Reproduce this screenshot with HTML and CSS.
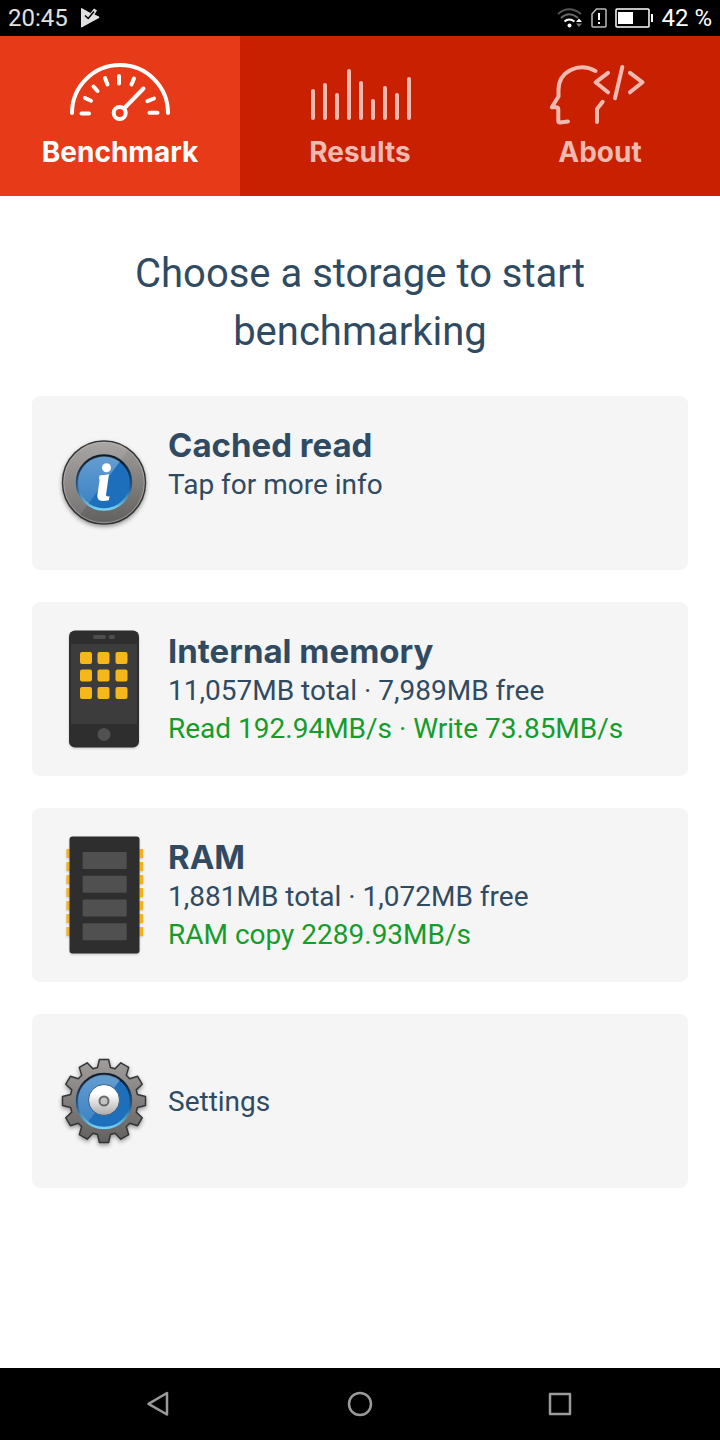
FILE: index.html
```html
<!DOCTYPE html>
<html lang="en">

<head>
  <meta charset="UTF-8">
  <meta name="viewport" content="width=device-width, initial-scale=1.0">
  <title>Storage Benchmark</title>
  <link rel="stylesheet" href="styles.css">
</head>

<body>
  <header class="status-bar">
    <span class="clock">20:45</span>
    <svg width="20" height="20" viewBox="0 0 20 20">
      <path d="M1 0.5 Q1 -0.3 2 0.2 L10.5 5 L14 0.5 L17 2.5 L14.5 6.5 L19 8.5 Q19.8 9.3 19 10 L2 19.3 Q1 19.7 1 18.5 Z" fill="#e0e0e0"/>
      <path d="M5 7.5 L8.2 10.5 L14 3.5" fill="none" stroke="#000" stroke-width="1.5"/>
    </svg>
    <div class="status-right">
      <svg width="26" height="20" viewBox="0 0 26 20" fill="none" stroke-width="2">
        <path d="M1 6 Q12 -3.5 24 6" stroke="#555"/>
        <path d="M4 10 Q12 2.5 21 10" stroke="#666"/>
        <path d="M7.5 13.5 Q12 9.5 17.5 13.5" stroke="#fff"/>
        <circle cx="12.5" cy="17.5" r="2" fill="#fff"/>
        <path d="M19 14 L22 10.5 L25 14 Z" fill="#fff"/>
        <path d="M19 15.5 L22 19 L25 15.5 Z" fill="#777"/>
      </svg>
      <svg width="16" height="20" viewBox="0 0 16 20">
        <path d="M5.5 1 H14 Q15 1 15 2 V18 Q15 19 14 19 H2 Q1 19 1 18 V6 Z" fill="none" stroke="#bbb" stroke-width="1.5"/>
        <path d="M8 5 V12 M8 14 V16" stroke="#fff" stroke-width="2"/>
      </svg>
      <svg width="38" height="20" viewBox="0 0 38 20">
        <rect x="1" y="1" width="33" height="18" rx="1" fill="none" stroke="#fff" stroke-width="1.5"/>
        <rect x="3" y="4" width="15" height="12" fill="#fff"/>
        <rect x="36" y="6" width="2" height="8" fill="#fff"/>
      </svg>
      <span>42 %</span>
    </div>
  </header>

  <nav class="tabs">
    <a href="#benchmark" class="tab active">
      <svg class="tab-icon" viewBox="0 0 100 62">
        <path d="M2 51 A48 48 0 0 1 98 51"/>
        <path d="M11.5 51.5 H19 M15 36 L21 38.7 M23.5 24.5 L27.5 29 M35 16 L37.5 22.5 M49 14 V21.5 M64 16.5 L61.5 22.5 M84 36.5 L77.5 39.2 M87.5 50.7 H79.5"/>
        <path d="M54 46.5 L73.5 26.5"/>
        <circle cx="49.7" cy="51" r="6"/>
      </svg>
      <span>Benchmark</span>
    </a>
    <a href="#results" class="tab">
      <svg class="tab-icon" viewBox="0 0 100 62">
        <path d="M3 29 V56 M15 23 V56 M27 33 V56 M39 9 V56 M51 21 V56 M63 39 V56 M75 26 V56 M87 33 V56 M99 17 V56"/>
      </svg>
      <span>Results</span>
    </a>
    <a href="#about" class="tab">
      <svg class="tab-icon" viewBox="0 0 100 62">
        <path d="M45.5 9 C29 0 8.5 9 8.5 28 V34.5 L1.8 45.3 H6.5 Q8.3 45.5 8.3 47.5 V59 Q8.3 60.6 10 60.5 L18 59.5"/>
        <path d="M52.7 39.8 L47 47 V60"/>
        <path d="M58 10.8 L45.6 20.3 L58 30.3 M72.3 5 L65 36.3 M80 10.8 L92.5 20.3 L80 30.3"/>
      </svg>
      <span>About</span>
    </a>
  </nav>

  <main>
    <h1>Choose a storage to start benchmarking</h1>

    <button class="card">
      <svg class="card-icon" width="88" height="88" viewBox="0 0 88 88">
        <defs>
          <linearGradient id="metal" x1="0" y1="0" x2="0" y2="1">
            <stop offset="0" stop-color="#a09d9b"/>
            <stop offset="1" stop-color="#62605f"/>
          </linearGradient>
          <linearGradient id="shine" x1="0" y1="0" x2="0" y2="1">
            <stop offset="0" stop-color="#fff" stop-opacity="0.32"/>
            <stop offset="1" stop-color="#fff" stop-opacity="0.14"/>
          </linearGradient>
          <linearGradient id="rim" x1="0" y1="0" x2="0" y2="1">
            <stop offset="0.1" stop-color="#0d1c2e"/>
            <stop offset="0.6" stop-color="#235d91"/>
            <stop offset="1" stop-color="#74d2f5"/>
          </linearGradient>
          <linearGradient id="silver" x1="0" y1="0" x2="0" y2="1">
            <stop offset="0.3" stop-color="#fff"/>
            <stop offset="1" stop-color="#a9a9ab"/>
          </linearGradient>
        </defs>
        <circle cx="44" cy="43.5" r="41.5" fill="url(#metal)" stroke="#353535" stroke-width="1.5"/>
        <circle cx="44" cy="43.5" r="40.3" fill="none" stroke="#bcbab8" stroke-width="1" opacity="0.6"/>
        <path d="M20 76 A40 40 0 0 1 68 11 Z" fill="#fff" opacity="0.1"/>
        <circle cx="44" cy="43.5" r="27" fill="#1d6fbb" stroke="url(#rim)" stroke-width="2.5"/>
        <path d="M28 65 A26 26 0 0 1 60 22.5 Z" fill="url(#shine)"/>
        <circle cx="46.5" cy="28.7" r="4.5" fill="#fff"/>
        <path d="M39.5 36.5 Q44 36.3 49 35.3 L46 56 Q45.8 57.8 49.5 57.3 L48.8 61.3 Q37 64 37.3 56.5 L39.7 40.5 L39 40 Z" fill="#fff"/>
      </svg>
      <span class="card-text">
        <strong class="card-title">Cached read</strong>
        <span>Tap for more info</span>
      </span>
    </button>

    <button class="card">
      <svg class="card-icon flat" width="88" height="118" viewBox="0 0 88 118">
        <rect x="9" y="0.5" width="70" height="117" rx="6" fill="#2e2e2e"/>
        <rect x="11" y="14" width="66" height="80" fill="#3c3c3c"/>
        <rect x="33" y="5" width="13" height="4" rx="2" fill="#4e4e4e"/>
        <rect x="48.5" y="5" width="6.5" height="4" rx="2" fill="#4e4e4e"/>
        <g fill="#f6b71a">
          <rect x="20" y="22" width="12" height="12" rx="2"/>
          <rect x="37.5" y="22" width="12" height="12" rx="2"/>
          <rect x="55.5" y="22" width="12" height="12" rx="2"/>
          <rect x="20" y="39.5" width="12" height="12" rx="2"/>
          <rect x="37.5" y="39.5" width="12" height="12" rx="2"/>
          <rect x="55.5" y="39.5" width="12" height="12" rx="2"/>
          <rect x="20" y="57" width="12" height="12" rx="2"/>
          <rect x="37.5" y="57" width="12" height="12" rx="2"/>
          <rect x="55.5" y="57" width="12" height="12" rx="2"/>
        </g>
        <circle cx="44" cy="104.5" r="6.5" fill="#515151"/>
      </svg>
      <span class="card-text">
        <strong class="card-title">Internal memory</strong>
        <span>11,057MB total · 7,989MB free</span>
        <span class="speed">Read 192.94MB/s · Write 73.85MB/s</span>
      </span>
    </button>

    <button class="card">
      <svg class="card-icon flat" width="88" height="118" viewBox="0 0 88 118">
        <!-- pins stick out on both sides of the chip -->
        <path d="M6.5 17.5 H83 M6.5 30.5 H83 M6.5 43.5 H83 M6.5 56.5 H83 M6.5 69.5 H83 M6.5 82.5 H83 M6.5 95.5 H83" stroke="#f3b21b" stroke-width="9"/>
        <rect x="9.5" y="0.5" width="70" height="117" rx="3" fill="#2e2e2e"/>
        <g fill="#505050">
          <rect x="22.7" y="16" width="44" height="17" rx="1"/>
          <rect x="22.7" y="39.7" width="44" height="17" rx="1"/>
          <rect x="22.7" y="63.5" width="44" height="17" rx="1"/>
          <rect x="22.7" y="87.3" width="44" height="17" rx="1"/>
        </g>
      </svg>
      <span class="card-text">
        <strong class="card-title">RAM</strong>
        <span>1,881MB total · 1,072MB free</span>
        <span class="speed">RAM copy 2289.93MB/s</span>
      </span>
    </button>

    <button class="card">
      <svg class="card-icon" width="88" height="88" viewBox="0 0 88 88">
        <g transform="translate(44 44)">
          <path d="M-6.5 -33.4 L-4.6 -41.5 L4.6 -41.5 L6.5 -33.4 L11.1 -32.2 L16.8 -38.2 L24.7 -33.6 L22.3 -25.7
            L25.7 -22.3 L33.6 -24.7 L38.2 -16.8 L32.2 -11.1 L33.4 -6.5 L41.5 -4.6 L41.5 4.6 L33.4 6.5
            L32.2 11.1 L38.2 16.8 L33.6 24.7 L25.7 22.3 L22.3 25.7 L24.7 33.6 L16.8 38.2 L11.1 32.2
            L6.5 33.4 L4.6 41.5 L-4.6 41.5 L-6.5 33.4 L-11.1 32.2 L-16.8 38.2 L-24.7 33.6 L-22.3 25.7
            L-25.7 22.3 L-33.6 24.7 L-38.2 16.8 L-32.2 11.1 L-33.4 6.5 L-41.5 4.6 L-41.5 -4.6 L-33.4 -6.5
            L-32.2 -11.1 L-38.2 -16.8 L-33.6 -24.7 L-25.7 -22.3 L-22.3 -25.7 L-24.7 -33.6 L-16.8 -38.2 L-11.1 -32.2 Z"
            fill="url(#metal)" stroke="#353535" stroke-width="1.5" stroke-linejoin="round"/>
          <circle r="27" fill="#1d6fbb" stroke="url(#rim)" stroke-width="2.5"/>
          <path d="M-16 21 A26 26 0 0 1 16 -21 Z" fill="url(#shine)"/>
          <circle cy="-1" r="15.5" fill="url(#silver)" stroke="#3c5d7e" stroke-width="1"/>
          <circle r="4.5" fill="#c4c4c4" stroke="#696969" stroke-width="2"/>
        </g>
      </svg>
      <span class="card-text middle">Settings</span>
    </button>
  </main>

  <footer class="nav-bar">
    <button class="nav-button" aria-label="Back">
      <svg width="28" height="28" viewBox="0 0 28 28"><path d="M21 3 V24.5 L2.5 13.8 Z"/></svg>
    </button>
    <button class="nav-button" aria-label="Home">
      <svg width="28" height="28" viewBox="0 0 28 28"><circle cx="14" cy="14" r="11"/></svg>
    </button>
    <button class="nav-button" aria-label="Recent apps">
      <svg width="28" height="28" viewBox="0 0 28 28"><rect x="4" y="4" width="20" height="20"/></svg>
    </button>
  </footer>
</body>

</html>
```
FILE: styles.css
```css
* {
  box-sizing: border-box;
}

body {
  margin: 0;
  min-height: 100vh;
  display: flex;
  flex-direction: column;
  background: #fff;
  color: #304b61;
  font-family: Roboto, sans-serif;
}

svg {
  display: block;
}

.status-bar {
  display: flex;
  align-items: center;
  gap: 12px;
  height: 36px;
  padding: 0 8px;
  background: #000;
  color: #fff;
  font-size: 24px;
  line-height: 36px;
}

.clock {
  color: #e0e0e0;
}

.status-right {
  display: flex;
  align-items: center;
  gap: 8px;
  margin-left: auto;
}

.tabs {
  display: flex;
  background: #c82000;
}

.tab {
  flex: 1;
  display: flex;
  flex-direction: column;
  align-items: center;
  gap: 10px;
  padding: 26px 0;
  color: #f1bab1;
  font-family: Inter, sans-serif;
  font-size: 28px;
  font-weight: 700;
  line-height: 36px;
  text-decoration: none;
}

.tab.active {
  background: #e63a19;
  color: #fff;
}

.tab-icon {
  width: 100px;
  height: 62px;
  overflow: visible;
  fill: none;
  stroke: currentColor;
  stroke-width: 4;
  stroke-linecap: round;
  stroke-linejoin: round;
}

main {
  flex: 1;
  display: flex;
  flex-direction: column;
  gap: 32px;
  padding: 49px 32px;
}

h1 {
  margin: 0 0 3px;
  font-size: 40px;
  font-weight: 400;
  line-height: 58px;
  text-align: center;
}

.card {
  display: flex;
  align-items: center;
  gap: 20px;
  padding: 28px;
  border: none;
  border-radius: 8px;
  background: #f5f5f5;
  color: inherit;
  font-family: inherit;
  font-size: 28px;
  line-height: 38px;
  text-align: left;
  cursor: pointer;
}

.card-icon {
  flex: none;
  overflow: visible;
  filter: drop-shadow(0 2px 2px rgba(0, 0, 0, 0.4));
}

.card-icon.flat {
  filter: drop-shadow(0 1px 1px rgba(0, 0, 0, 0.2));
}

.card-text {
  display: flex;
  flex-direction: column;
  min-height: 118px;
}

.card-text.middle {
  justify-content: center;
  padding-top: 2px;
}

.card-title {
  font-family: Inter, sans-serif;
  font-size: 33px;
  font-weight: 700;
  line-height: 42px;
}

.speed {
  color: #149c2c;
}

.nav-bar {
  display: flex;
  justify-content: center;
  height: 72px;
  background: #000;
}

.nav-button {
  display: flex;
  align-items: center;
  justify-content: center;
  width: 200px;
  padding: 0;
  border: none;
  background: none;
}

.nav-button svg {
  fill: none;
  stroke: #9a9a9a;
  stroke-width: 2.5;
  stroke-linejoin: round;
}
```
